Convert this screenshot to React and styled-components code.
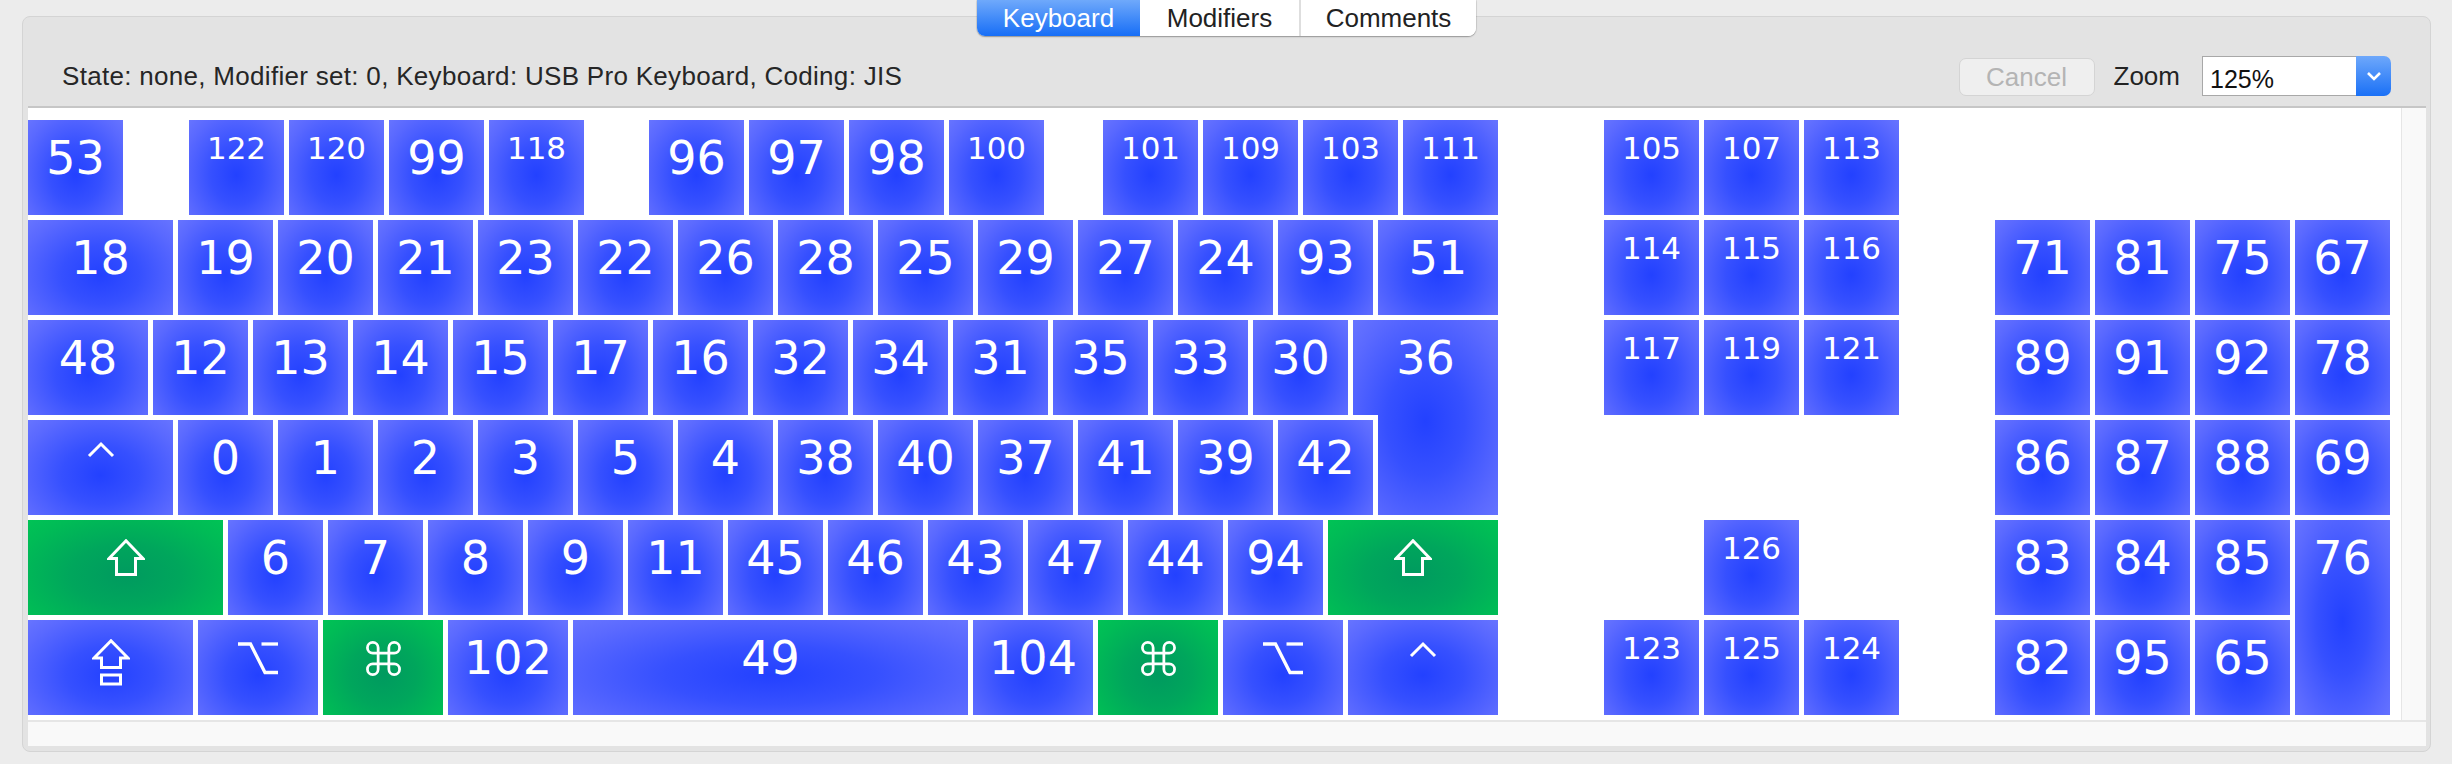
import React from 'react';
import styled, { createGlobalStyle } from 'styled-components';

const GlobalStyle = createGlobalStyle`
  html, body {
    margin: 0;
    padding: 0;
    background: #ececec;
    overflow: hidden;
  }
  body {
    font-family: "Liberation Sans", Arial, sans-serif;
    color: #242424;
  }
`;

const blueGrad = (y) =>
  `radial-gradient(ellipse farthest-corner at 50% ${y}%, #2341ff 0%, #3650ff 38%, #5a69ff 80%, #6774ff 100%)`;
const greenGrad = (y) =>
  `radial-gradient(ellipse farthest-corner at 50% ${y}%, #009a5f 0%, #00a65c 40%, #00bb56 80%, #00c355 100%)`;

const Window = styled.div`
  width: 2452px;
  height: 764px;
  padding: 0 21px 0 22px;
  box-sizing: border-box;
`;

const TabBar = styled.div`
  display: flex;
  justify-content: center;
  height: 36px;
  margin-bottom: -20px;
  position: relative;
  z-index: 1;
`;

const Segments = styled.div`
  display: flex;
  background: #fff;
  border-radius: 0 0 8px 8px;
  overflow: hidden;
  box-shadow: 0 1px 1.5px rgba(0, 0, 0, 0.3), 0 0 0 1px rgba(0, 0, 0, 0.06);
`;

const Segment = styled.div`
  width: ${p => p.$w}px;
  height: 36px;
  display: flex;
  align-items: center;
  justify-content: center;
  font-size: 26px;
  color: ${p => (p.$active ? '#fff' : '#222')};
  background: ${p => (p.$active ? 'linear-gradient(#6fa9fb, #176ef6)' : '#fff')};
  border-left: ${p => (p.$divider ? '2px solid #dedede' : 'none')};
  box-sizing: border-box;
`;

const Panel = styled.div`
  height: 736px;
  border: 1px solid #d4d4d4;
  border-radius: 8px;
  background: #e3e3e3;
  padding: 0 4px 5px 5px;
  box-sizing: border-box;
  display: flex;
  flex-direction: column;
`;

const Header = styled.div`
  height: 89px;
  padding: 39px 35px 0 34px;
  box-sizing: border-box;
  display: flex;
  align-items: flex-start;
`;

const HeaderRow = styled.div`
  flex: 1;
  height: 40px;
  display: flex;
  align-items: center;
`;

const Status = styled.div`
  flex: 1;
  font-size: 26px;
  letter-spacing: 0.3px;
  color: #262626;
`;

const CancelButton = styled.div`
  width: 136px;
  height: 38px;
  margin-top: 2px;
  border: 1px solid #d4d4d4;
  border-radius: 7px;
  background: #efefef;
  color: #b4b4b4;
  font-size: 26px;
  display: flex;
  align-items: center;
  justify-content: center;
  box-sizing: border-box;
  margin-right: 19px;
`;

const ZoomLabel = styled.div`
  font-size: 26px;
  color: #232323;
  margin-right: 22px;
`;

const Select = styled.div`
  width: 189px;
  height: 40px;
  display: flex;
`;

const SelectValue = styled.div`
  flex: 1;
  background: #fff;
  border: 1px solid #a8a8a8;
  border-right: none;
  font-size: 25px;
  color: #111;
  padding: 8px 0 0 7px;
  box-sizing: border-box;
`;

const SelectButton = styled.div`
  width: 35px;
  border-radius: 0 7px 7px 0;
  background: linear-gradient(#6ea8fb, #1a70f6);
  display: flex;
  align-items: center;
  justify-content: center;
`;

const ScrollView = styled.div`
  flex: 1;
  border-top: 2px solid #c6c6c6;
  display: flex;
  flex-direction: column;
`;

const ScrollBody = styled.div`
  height: 612px;
  display: flex;
`;

const Canvas = styled.div`
  flex: 1;
  background: #fff;
  padding-top: 12px;
  display: flex;
  align-items: flex-start;
`;

const VTrack = styled.div`
  width: 24px;
  background: #f9f9f9;
  border-left: 1px solid #e6e6e6;
`;

const HTrack = styled.div`
  height: 24px;
  background: #f9f9f9;
  border-top: 2px solid #e6e6e6;
`;

const Block = styled.div`
  width: ${p => p.$w}px;
  margin-left: ${p => p.$ml || 0}px;
  display: flex;
  flex-direction: column;
  gap: 5px;
  flex: none;
`;

const Row = styled.div`
  height: 95px;
  display: flex;
  align-items: flex-start;
  gap: 5px;
`;

const Key = styled.div`
  flex: none;
  width: ${p => p.$w || 95}px;
  height: ${p => p.$h || 95}px;
  margin-left: ${p => p.$ml || 0}px;
  background: ${p => (p.$green ? greenGrad(p.$h ? 52 : 58) : blueGrad(p.$h ? 52 : 58))};
  color: #fff;
  font-family: "DejaVu Sans", sans-serif;
  font-size: ${p => (p.$small ? 31 : 46)}px;
  line-height: 1;
  text-align: center;
  padding-top: ${p => (p.$small ? 12.5 : 15)}px;
  box-sizing: border-box;
  position: relative;
  z-index: ${p => (p.$h ? 1 : 0)};
`;

const ReturnKey = styled(Key)`
  clip-path: polygon(0 0, 100% 0, 100% 100%, 25px 100%, 25px 95px, 0 95px);
`;

const Glyph = styled.div`
  display: flex;
  justify-content: center;
  margin-top: ${p => p.$top - 15}px;
`;

const stroke = { fill: 'none', stroke: '#fff', strokeWidth: 3 };

const ShiftIcon = () => (
  <svg width="38" height="37" viewBox="0 0 38 37">
    <path d="M19 1.8 L36 19.5 H28.5 V35.5 H9.5 V19.5 H2 Z" {...stroke} />
  </svg>
);

const CapsIcon = () => (
  <svg width="38" height="47" viewBox="0 0 38 47">
    <path d="M19 1.8 L36 19 H28.5 V28.5 H9.5 V19 H2 Z" {...stroke} />
    <rect x="9.5" y="36" width="19" height="9" {...stroke} />
  </svg>
);

const OptionIcon = () => (
  <svg width="40" height="33" viewBox="0 0 40 33">
    <path d="M0 2 H12.5 L27 30.5 H40" {...stroke} strokeWidth="3.3" />
    <path d="M23.5 2 H40" {...stroke} strokeWidth="3.3" />
  </svg>
);

const CaretIcon = () => (
  <svg width="28" height="17" viewBox="0 0 28 17">
    <polyline points="2,15 14,3 26,15" {...stroke} />
  </svg>
);

const CommandIcon = () => (
  <svg width="37" height="35" viewBox="2.2 2.2 19.6 19.6">
    <path
      d="M15 6v12a3 3 0 1 0 3-3H6a3 3 0 1 0 3 3V6a3 3 0 1 0-3 3h12a3 3 0 1 0-3-3"
      fill="none"
      stroke="#fff"
      strokeWidth="1.55"
    />
  </svg>
);

const icons = {
  shift: [ShiftIcon, 19],
  caps: [CapsIcon, 19],
  option: [OptionIcon, 22],
  caret: [CaretIcon, 21],
  cmd: [CommandIcon, 21],
};

const main = [
  [
    { l: '53' },
    { l: '122', s: 1, ml: 61 },
    { l: '120', s: 1 },
    { l: '99' },
    { l: '118', s: 1 },
    { l: '96', ml: 60 },
    { l: '97' },
    { l: '98' },
    { l: '100', s: 1 },
    { l: '101', s: 1, ml: 54 },
    { l: '109', s: 1 },
    { l: '103', s: 1 },
    { l: '111', s: 1 },
  ],
  [
    { l: '18', w: 145 },
    ...['19', '20', '21', '23', '22', '26', '28', '25', '29', '27', '24', '93'].map(l => ({ l })),
    { l: '51', w: 120 },
  ],
  [
    { l: '48', w: 120 },
    ...['12', '13', '14', '15', '17', '16', '32', '34', '31', '35', '33', '30'].map(l => ({ l })),
    { l: '36', w: 145, h: 195, ret: 1 },
  ],
  [
    { i: 'caret', w: 145 },
    ...['0', '1', '2', '3', '5', '4', '38', '40', '37', '41', '39', '42'].map(l => ({ l })),
  ],
  [
    { i: 'shift', w: 195, g: 1 },
    ...['6', '7', '8', '9', '11', '45', '46', '43', '47', '44', '94'].map(l => ({ l })),
    { i: 'shift', w: 170, g: 1 },
  ],
  [
    { i: 'caps', w: 165 },
    { i: 'option', w: 120 },
    { i: 'cmd', w: 120, g: 1 },
    { l: '102', w: 120 },
    { l: '49', w: 395 },
    { l: '104', w: 120 },
    { i: 'cmd', w: 120, g: 1 },
    { i: 'option', w: 120 },
    { i: 'caret', w: 150 },
  ],
];

const small = list => list.map(l => ({ l, s: 1 }));

const nav = [
  small(['105', '107', '113']),
  small(['114', '115', '116']),
  small(['117', '119', '121']),
  [],
  [{ l: '126', s: 1, ml: 100 }],
  small(['123', '125', '124']),
];

const numpad = [
  [],
  ['71', '81', '75', '67'].map(l => ({ l })),
  ['89', '91', '92', '78'].map(l => ({ l })),
  ['86', '87', '88', '69'].map(l => ({ l })),
  [...['83', '84', '85'].map(l => ({ l })), { l: '76', h: 195 }],
  ['82', '95', '65'].map(l => ({ l })),
];

const KeyCap = ({ k }) => {
  const Comp = k.ret ? ReturnKey : Key;
  const icon = k.i && icons[k.i];
  return (
    <Comp $w={k.w} $h={k.h} $ml={k.ml} $small={k.s} $green={k.g}>
      {icon ? (
        <Glyph $top={icon[1]}>{React.createElement(icon[0])}</Glyph>
      ) : (
        k.l
      )}
    </Comp>
  );
};

const KeyBlock = ({ rows, width, ml }) => (
  <Block $w={width} $ml={ml}>
    {rows.map((row, i) => (
      <Row key={i}>
        {row.map((k, j) => (
          <KeyCap key={j} k={k} />
        ))}
      </Row>
    ))}
  </Block>
);

export default function App() {
  return (
    <Window>
      <GlobalStyle />
      <TabBar>
        <Segments>
          <Segment $w={163} $active>Keyboard</Segment>
          <Segment $w={159}>Modifiers</Segment>
          <Segment $w={177} $divider>Comments</Segment>
        </Segments>
      </TabBar>
      <Panel>
        <Header>
          <HeaderRow>
            <Status>State: none, Modifier set: 0, Keyboard: USB Pro Keyboard, Coding: JIS</Status>
            <CancelButton>Cancel</CancelButton>
            <ZoomLabel>Zoom</ZoomLabel>
            <Select>
              <SelectValue>125%</SelectValue>
              <SelectButton>
                <svg width="16" height="10" viewBox="0 0 16 10">
                  <polyline points="2,2 8,8 14,2" fill="none" stroke="#fff" strokeWidth="2.6" />
                </svg>
              </SelectButton>
            </Select>
          </HeaderRow>
        </Header>
        <ScrollView>
          <ScrollBody>
            <Canvas>
              <KeyBlock rows={main} width={1470} />
              <KeyBlock rows={nav} width={295} ml={106} />
              <KeyBlock rows={numpad} width={395} ml={96} />
            </Canvas>
            <VTrack />
          </ScrollBody>
          <HTrack />
        </ScrollView>
      </Panel>
    </Window>
  );
}
